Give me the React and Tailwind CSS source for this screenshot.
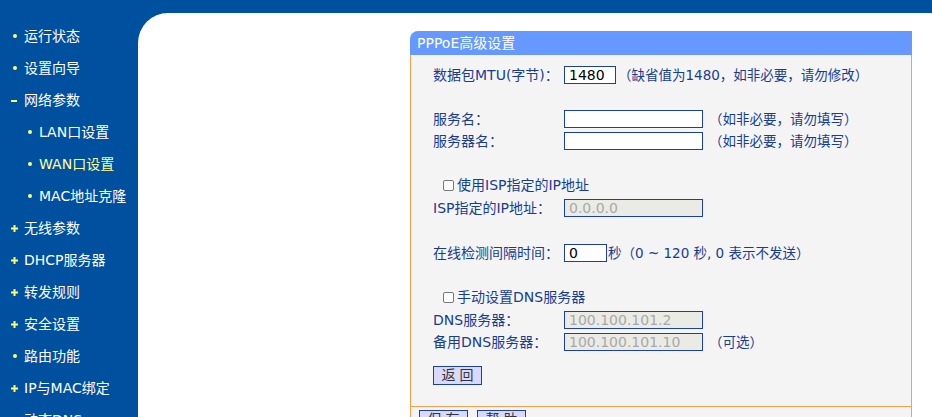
const FONT = { fontFamily: '"DejaVu Sans", "Noto Sans CJK SC", sans-serif' };

const menu = [
  { t: "运行状态", m: "dot" },
  { t: "设置向导", m: "dot" },
  { t: "网络参数", m: "minus" },
  { t: "LAN口设置", m: "dot", sub: true },
  { t: "WAN口设置", m: "dot", sub: true, active: true },
  { t: "MAC地址克隆", m: "dot", sub: true },
  { t: "无线参数", m: "plus" },
  { t: "DHCP服务器", m: "plus" },
  { t: "转发规则", m: "plus" },
  { t: "安全设置", m: "plus" },
  { t: "路由功能", m: "dot" },
  { t: "IP与MAC绑定", m: "plus" },
  { t: "动态DNS", m: "dot" },
];

function Marker({ m }) {
  if (m === "dot") return <span className="w-[4px] h-[4px] rounded-full bg-[#ffff66] mx-[2px]" />;
  if (m === "minus") return <span className="w-[6px] h-[2px] bg-[#ffff66] mt-[1px]" />;
  return (
    <svg width="7" height="7" viewBox="0 0 7 7">
      <rect x="0" y="2.5" width="7" height="2" fill="#ffff66" />
      <rect x="2.5" y="0" width="2" height="7" fill="#ffff66" />
    </svg>
  );
}

function Sidebar() {
  return (
    <div className="w-[138px] shrink-0 pt-[7px]">
      {menu.map((it) => (
        <div
          key={it.t}
          className={`h-[32px] flex items-center text-[14px] ${it.sub ? "pl-[26px]" : "pl-[11px]"} ${
            it.active ? "text-[#ffff99]" : "text-white"
          }`}
        >
          <span className="w-[13px] flex items-center">
            <Marker m={it.m} />
          </span>
          <span>{it.t}</span>
        </div>
      ))}
    </div>
  );
}

function Field({ w, value, disabled }) {
  return (
    <div
      className={`h-[18px] border border-[#1c3fa3] flex items-center pl-[4px] text-[14px] leading-none ${
        disabled ? "bg-[#ebebe6] text-[#a8a8a8]" : "bg-white text-black"
      }`}
      style={{ width: w }}
    >
      {value}
    </div>
  );
}

function Row({ label, children, className = "" }) {
  return (
    <div className={`h-[22px] flex items-center ${className}`}>
      <span className="w-[131px] shrink-0">{label}</span>
      {children}
    </div>
  );
}

function Hint({ children, className = "" }) {
  return <span className={`text-[13.5px] ${className}`}>{children}</span>;
}

function Check({ label, className = "" }) {
  return (
    <div className={`h-[22px] flex items-center pl-[10px] ${className}`}>
      <span className="w-[11px] h-[11px] border border-[#777] rounded-[2px] bg-white mr-[3px]" />
      <span>{label}</span>
    </div>
  );
}

function Btn({ children }) {
  return (
    <div className="w-[49px] h-[19px] border border-[#1c3fa3] bg-[#d9d9fb] text-[#333] text-[14px] flex items-center justify-center tracking-[4px] pl-[4px]">
      {children}
    </div>
  );
}

export default function App() {
  return (
    <div className="w-full h-[417px] overflow-hidden bg-[#0050a0] flex flex-col" style={FONT}>
      <div className="h-[13px] shrink-0" />
      <div className="flex flex-1">
        <Sidebar />
        <div className="flex-1 bg-white rounded-tl-[30px] pl-[272px] pt-[18px]">
          <div className="w-[502px] text-[14px] text-[#183c90]">
            <div className="h-[24px] bg-[#6699ff] rounded-tl-[8px] text-white flex items-center pl-[7px]">
              PPPoE高级设置
            </div>
            <div className="bg-[#f4f4f4] border-x border-b border-[#f7a04c] pl-[22px] pt-[9px] pb-[21px]">
              <Row label="数据包MTU(字节)：">
                <Field w={52} value="1480" />
                <Hint className="ml-[2px]">（缺省值为1480，如非必要，请勿修改）</Hint>
              </Row>
              <Row label="服务名：" className="mt-[22px]">
                <Field w={139} />
                <Hint className="ml-[6px]">（如非必要，请勿填写）</Hint>
              </Row>
              <Row label="服务器名：">
                <Field w={139} />
                <Hint className="ml-[6px]">（如非必要，请勿填写）</Hint>
              </Row>
              <Check label="使用ISP指定的IP地址" className="mt-[22px]" />
              <Row label="ISP指定的IP地址：" className="mt-[1px]">
                <Field w={139} value="0.0.0.0" disabled />
              </Row>
              <Row label="在线检测间隔时间：" className="mt-[23px]">
                <Field w={43} value="0" />
                <Hint className="ml-[1px]">秒（0 ~ 120 秒, 0 表示不发送）</Hint>
              </Row>
              <Check label="手动设置DNS服务器" className="mt-[22px]" />
              <Row label="DNS服务器：" className="mt-[1px]">
                <Field w={139} value="100.100.101.2" disabled />
              </Row>
              <Row label="备用DNS服务器：">
                <Field w={139} value="100.100.101.10" disabled />
                <Hint className="ml-[6px]">（可选）</Hint>
              </Row>
              <div className="mt-[13px]">
                <Btn>返回</Btn>
              </div>
            </div>
            <div className="bg-[#f4f4f4] border-x border-[#f7a04c] pl-[8px] pt-[3px] h-[40px] flex gap-[9px]">
              <Btn>保存</Btn>
              <Btn>帮助</Btn>
            </div>
          </div>
        </div>
      </div>
    </div>
  );
}
